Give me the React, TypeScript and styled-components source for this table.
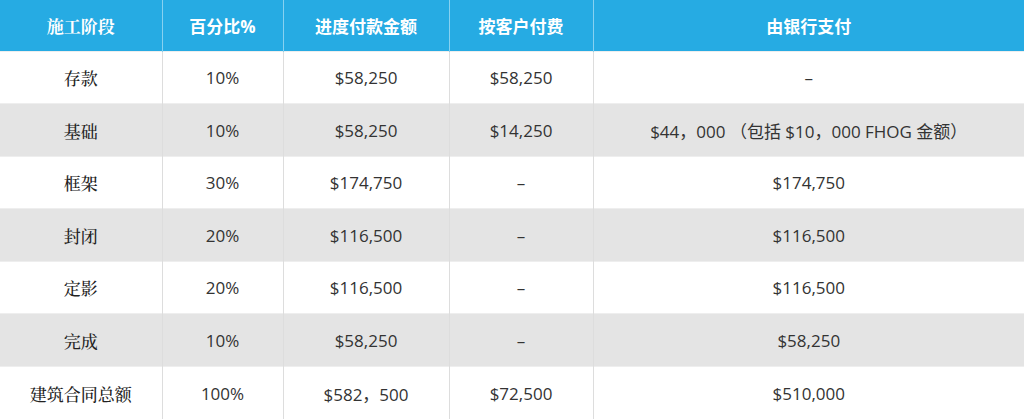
import React from "react";
import styled, { createGlobalStyle } from "styled-components";

const Global = createGlobalStyle`
  html, body { margin: 0; padding: 0; background: #ffffff; }
  body { font-family: "Open Sans", "Noto Sans CJK SC", sans-serif; }
`;

const Table = styled.table`
  width: 1024px;
  border-collapse: collapse;
  table-layout: fixed;
  font-family: "Open Sans", "Noto Sans CJK SC", sans-serif;
  color: #333333;
`;

const HeadCell = styled.th<{ $serif?: boolean }>`
  height: 51px;
  padding: 0;
  background: #26abe3;
  color: #ffffff;
  font-size: 17px;
  font-weight: 700;
  text-align: center;
  vertical-align: middle;
  border-left: 1px solid rgba(255, 255, 255, 0.45);
  font-family: ${(p) =>
    p.$serif
      ? '"Noto Serif CJK SC", "Noto Sans CJK SC", serif'
      : '"Open Sans", "Noto Sans CJK SC", sans-serif'};
  &:first-child { border-left: none; }
`;

const Row = styled.tr<{ $striped: boolean; $h: number }>`
  height: ${(p) => p.$h}px;
  background: ${(p) => (p.$striped ? "#e4e4e4" : "#ffffff")};
  border-top: 1px solid #eeeeee;
`;

const Cell = styled.td<{ $serif?: boolean }>`
  padding: 0;
  text-align: center;
  vertical-align: middle;
  font-size: 17px;
  border-left: 1px solid #dddddd;
  font-family: ${(p) =>
    p.$serif
      ? '"Noto Serif CJK SC", "Noto Sans CJK SC", serif'
      : '"Open Sans", "Noto Sans CJK SC", sans-serif'};
  font-weight: ${(p) => (p.$serif ? 500 : 400)};
  color: ${(p) => (p.$serif ? "#222222" : "#333333")};
  &:first-child { border-left: none; }
`;

const widths = [162, 121, 166, 144, 431];
const heads = ["施工阶段", "百分比%", "进度付款金额", "按客户付费", "由银行支付"];

const rows: string[][] = [
  ["存款", "10%", "$58,250", "$58,250", "–"],
  ["基础", "10%", "$58,250", "$14,250", "$44，000 （包括 $10，000 FHOG 金额）"],
  ["框架", "30%", "$174,750", "–", "$174,750"],
  ["封闭", "20%", "$116,500", "–", "$116,500"],
  ["定影", "20%", "$116,500", "–", "$116,500"],
  ["完成", "10%", "$58,250", "–", "$58,250"],
  ["建筑合同总额", "100%", "$582，500", "$72,500", "$510,000"],
];

const heights = [52, 53, 52, 53, 52, 53, 53];

export default function App() {
  return (
    <>
      <Global />
      <Table>
        <colgroup>
          {widths.map((w, i) => (
            <col key={i} style={{ width: w }} />
          ))}
        </colgroup>
        <thead>
          <tr>
            {heads.map((h, i) => (
              <HeadCell key={h} $serif={i === 0}>
                {h}
              </HeadCell>
            ))}
          </tr>
        </thead>
        <tbody>
          {rows.map((r, i) => (
            <Row key={i} $striped={i % 2 === 1} $h={heights[i]}>
              {r.map((c, j) => (
                <Cell key={j} $serif={j === 0}>
                  {c}
                </Cell>
              ))}
            </Row>
          ))}
        </tbody>
      </Table>
    </>
  );
}
